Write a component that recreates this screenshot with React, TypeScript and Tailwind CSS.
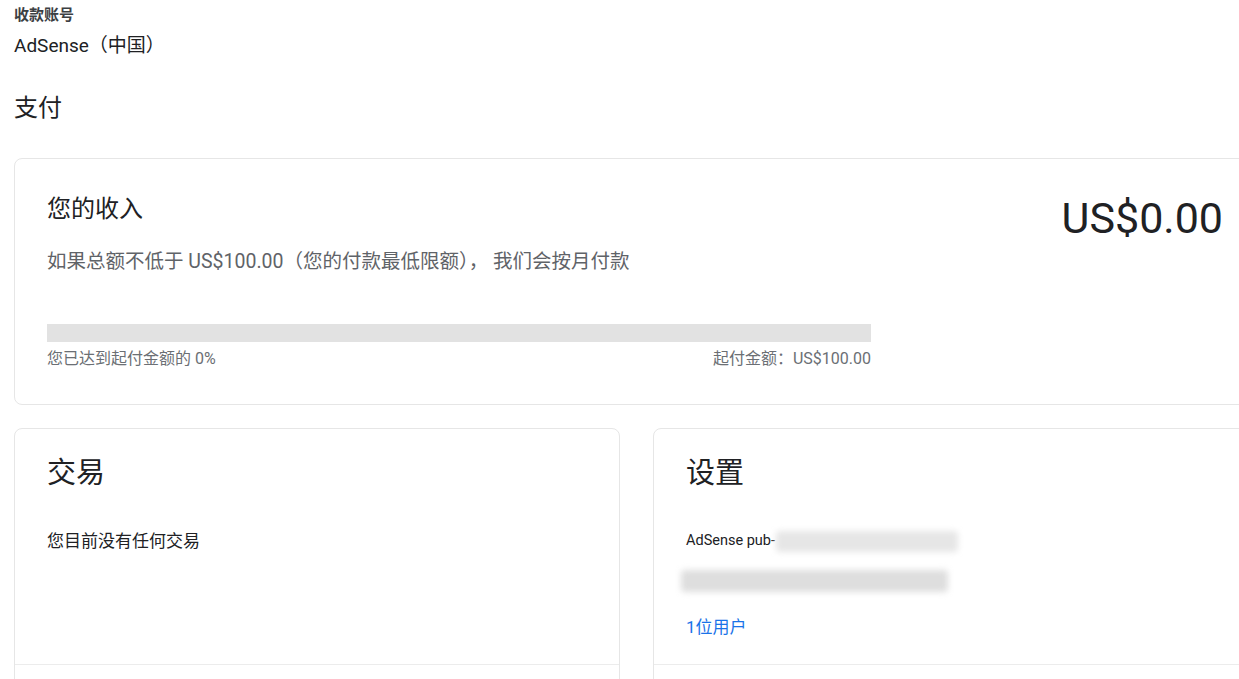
const font = { fontFamily: "Roboto, 'Noto Sans CJK SC', sans-serif" };

function Card({ className, children }: { className?: string; children: React.ReactNode }) {
  return (
    <div className={`rounded-[8px] border border-[#e6e6e6] bg-white ${className ?? ''}`}>{children}</div>
  );
}

export default function App() {
  return (
    <div className="w-[1239px] h-[679px] overflow-hidden bg-white text-[#202124]" style={font}>
      <div className="w-[1260px] pl-[14px]">
        {/* Account */}
        <div className="pt-[5px] text-[15px] leading-[20px] font-semibold text-[#3c4043]">收款账号</div>
        <div className="mt-[9px] text-[19px] leading-[24px] text-[#202124]">AdSense（中国）</div>
        <h2 className="mt-[35px] text-[24px] leading-[30px] text-[#202124]">支付</h2>

        {/* Earnings */}
        <Card className="mt-[35px] w-[1243px] h-[247px] pl-[32px] pr-[33px]">
          <div className="flex justify-between">
            <div>
              <div className="mt-[35px] text-[24px] leading-[30px] text-[#202124]">您的收入</div>
              <div className="mt-[25px] text-[19.5px] leading-[26px] text-[#5f6368] whitespace-pre">
                如果总额不低于 US$100.00（您的付款最低限额）， 我们会按月付款
              </div>
            </div>
            <div className="mt-[34px] text-[43px] leading-[50px] text-[#202124]">US$0.00</div>
          </div>
          <div className="mt-[49px] w-[824px]">
            <div className="h-[18px] bg-[#e2e2e2]" />
            <div className="mt-[7px] flex justify-between text-[16px] leading-[20px] text-[#6b6f74]">
              <span>您已达到起付金额的 0%</span>
              <span>起付金额：US$100.00</span>
            </div>
          </div>
        </Card>

        {/* Bottom cards */}
        <div className="mt-[23px] flex gap-[33px]">
          <Card className="w-[606px] h-[300px] flex flex-col">
            <div className="px-[32px] h-[235px]">
              <div className="mt-[26px] text-[29px] leading-[36px] text-[#202124]">交易</div>
              <div className="mt-[38px] text-[17px] leading-[24px] text-[#202124]">您目前没有任何交易</div>
            </div>
            <div className="border-t border-[#ececec]" />
          </Card>

          <Card className="w-[606px] h-[300px] flex flex-col">
            <div className="px-[32px] h-[235px]">
              <div className="mt-[26px] text-[29px] leading-[36px] text-[#202124]">设置</div>
              <div className="mt-[38px] flex items-center h-[24px] text-[14.5px] text-[#202124]">
                <span>AdSense pub-</span>
                <span className="ml-[1px] w-[182px] h-[21px] rounded-[4px] bg-[#e6e6e6] blur-[3px]" />
              </div>
              <div className="mt-[17px] ml-[-5px] w-[267px] h-[22px] rounded-[4px] bg-[#dedede] blur-[3px]" />
              <div className="mt-[23px] text-[17px] leading-[24px] text-[#1a73e8]">1位用户</div>
            </div>
            <div className="border-t border-[#ececec]" />
          </Card>
        </div>
      </div>
    </div>
  );
}
